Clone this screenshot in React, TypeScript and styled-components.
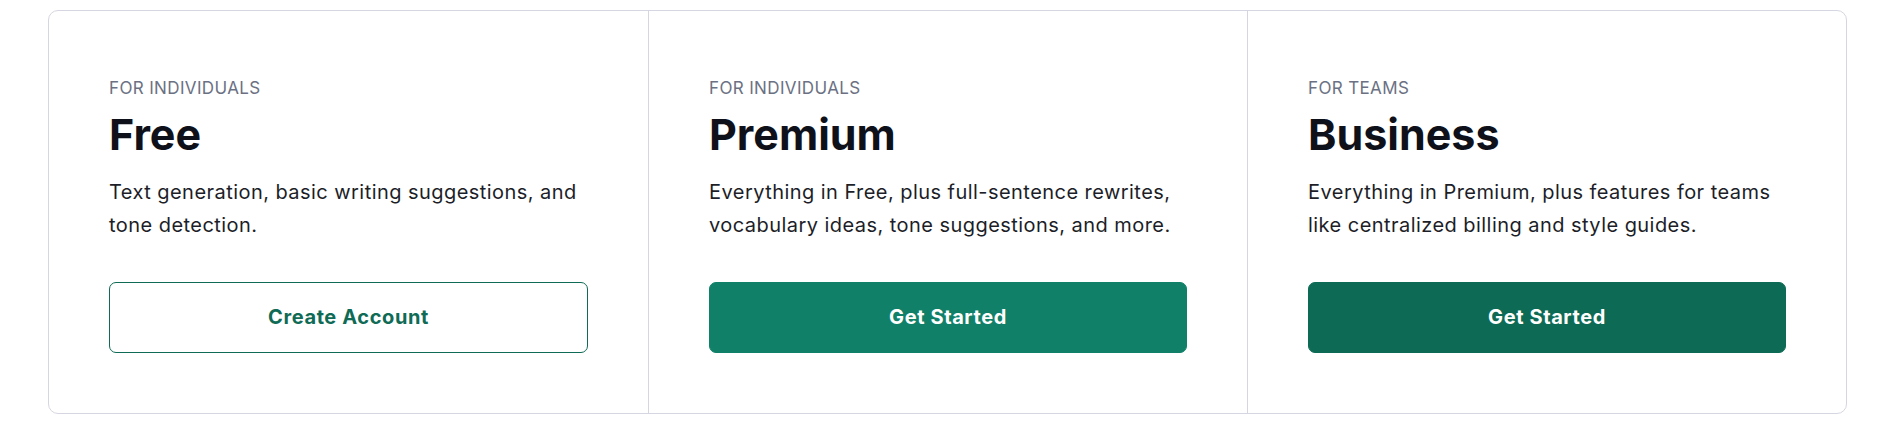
import React from "react";
import styled, { createGlobalStyle } from "styled-components";

const Global = createGlobalStyle`
  html, body {
    margin: 0;
    padding: 0;
    background: #ffffff;
  }
  body {
    font-family: Inter, "Noto Sans", "Liberation Sans", sans-serif;
    -webkit-font-smoothing: antialiased;
  }
  * { box-sizing: border-box; }
`;

const Page = styled.div`
  padding: 10px 46px 0 48px;
`;

const Plans = styled.div`
  display: grid;
  grid-template-columns: repeat(3, 1fr);
  border: 1px solid #d6d6e2;
  border-radius: 10px;
  background: #ffffff;
  height: 404px;
`;

const Plan = styled.section`
  display: flex;
  flex-direction: column;
  padding: 65px 60px 60px;
  & + & {
    border-left: 1px solid #d6d6e2;
  }
`;

const Audience = styled.div`
  font-size: 17px;
  line-height: 24px;
  color: #6b7183;
  text-transform: uppercase;
  letter-spacing: 0.36px;
`;

const Title = styled.h2`
  margin: 9px 0 0;
  font-size: 43px;
  line-height: 50px;
  font-weight: 700;
  color: #0f111a;
  letter-spacing: 0;
`;

const Description = styled.p`
  margin: 17px 0 0;
  font-size: 20px;
  line-height: 33px;
  color: #1c1e28;
  letter-spacing: 0.45px;
`;

type Variant = "outline" | "primary" | "dark";

const bg: Record<Variant, string> = {
  outline: "#ffffff",
  primary: "#108168",
  dark: "#0d6b55",
};

const Action = styled.button<{ $variant: Variant }>`
  margin-top: auto;
  height: 71px;
  width: 100%;
  padding: 0 0 2px;
  border-radius: 7px;
  border: 1px solid ${(p) => (p.$variant === "outline" ? "#0f6b55" : bg[p.$variant])};
  background: ${(p) => bg[p.$variant]};
  color: ${(p) => (p.$variant === "outline" ? "#0f6b55" : "#ffffff")};
  font-family: Inter, "Noto Sans", "Liberation Sans", sans-serif;
  font-size: 20px;
  font-weight: 700;
  letter-spacing: 0.6px;
  cursor: pointer;
`;

const plans: { audience: string; title: string; text: string; cta: string; variant: Variant }[] = [
  {
    audience: "For individuals",
    title: "Free",
    text: "Text generation, basic writing suggestions, and tone detection.",
    cta: "Create Account",
    variant: "outline",
  },
  {
    audience: "For individuals",
    title: "Premium",
    text: "Everything in Free, plus full-sentence rewrites, vocabulary ideas, tone suggestions, and more.",
    cta: "Get Started",
    variant: "primary",
  },
  {
    audience: "For teams",
    title: "Business",
    text: "Everything in Premium, plus features for teams like centralized billing and style guides.",
    cta: "Get Started",
    variant: "dark",
  },
];

export default function App() {
  return (
    <>
      <Global />
      <Page>
        <Plans>
          {plans.map((p) => (
            <Plan key={p.title}>
              <Audience>{p.audience}</Audience>
              <Title>{p.title}</Title>
              <Description>{p.text}</Description>
              <Action $variant={p.variant}>{p.cta}</Action>
            </Plan>
          ))}
        </Plans>
      </Page>
    </>
  );
}
